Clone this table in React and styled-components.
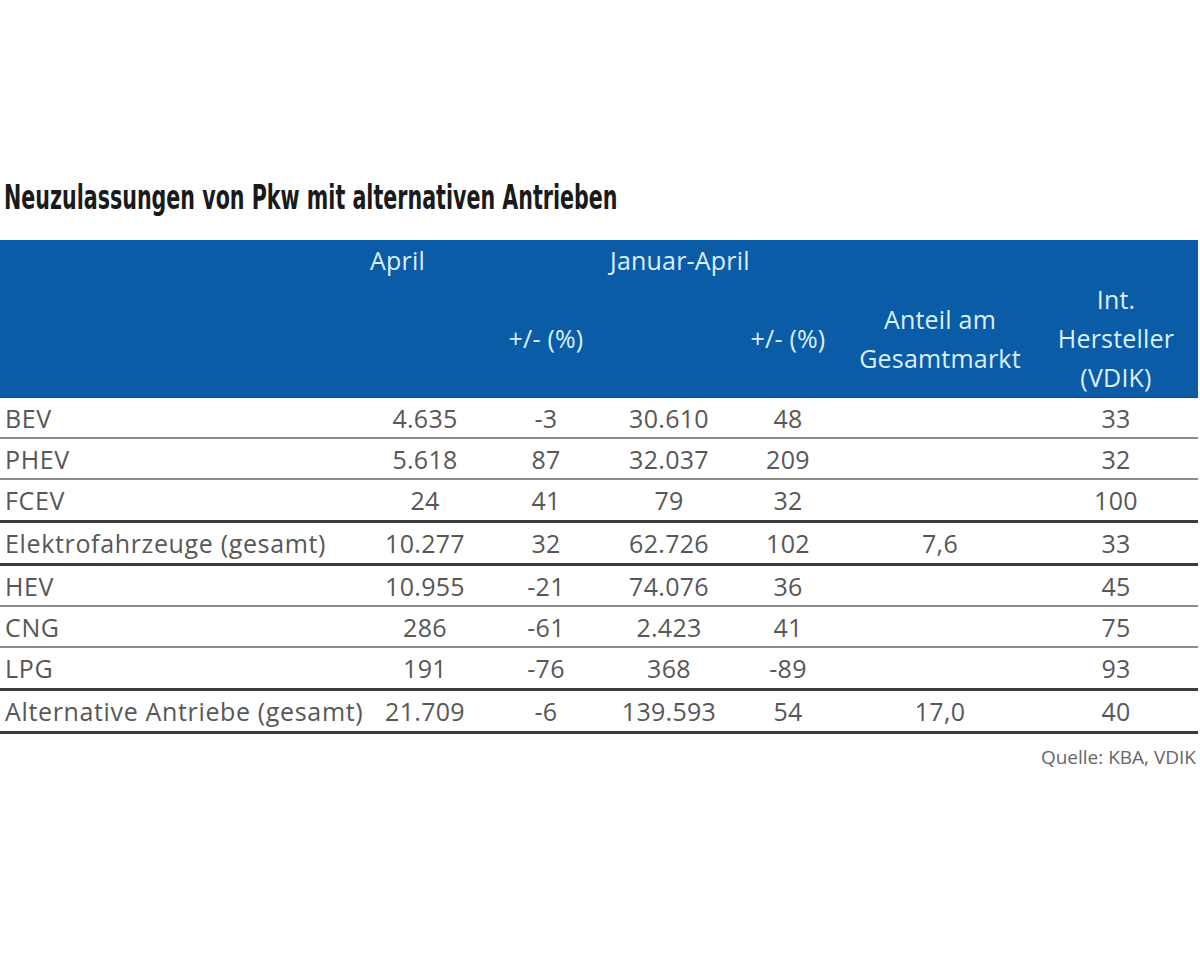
import React from "react";
import styled, { createGlobalStyle } from "styled-components";

const Global = createGlobalStyle`
  html, body { margin: 0; padding: 0; background: #ffffff; }
  body { font-family: "Open Sans", "Liberation Sans", sans-serif; }
`;

const COLS = "366px 118px 124px 122px 116px 188px 164px";

const Page = styled.div`
  width: 1200px;
  height: 975px;
  padding-top: 178px;
  box-sizing: border-box;
  background: #fff;
`;

const Title = styled.h1`
  margin: 0 0 0 4px;
  height: 62px;
  font-family: "Liberation Sans Narrow", "DejaVu Sans Condensed", sans-serif;
  font-weight: 700;
  font-size: 33px;
  line-height: 40px;
  color: #1a1a1a;
  transform: scaleX(0.695);
  transform-origin: left top;
  white-space: nowrap;
`;

const Table = styled.div`
  width: 1198px;
`;

const Head = styled.div`
  display: grid;
  grid-template-columns: ${COLS};
  grid-template-rows: 40px 117px;
  background: #0b5ca6;
  color: #dcefff;
  font-size: 25px;
  line-height: 39px;
  letter-spacing: 0.2px;
  border-bottom: 1px solid #084a87;
`;

const GroupLabel = styled.div`
  grid-row: 1;
  grid-column: ${(p) => p.$col} / span 2;
  padding-left: ${(p) => p.$pad}px;
  display: flex;
  align-items: center;
  white-space: nowrap;
`;

const SubLabel = styled.div`
  grid-row: 2;
  grid-column: ${(p) => p.$col};
  display: flex;
  align-items: center;
  justify-content: center;
  text-align: center;
  white-space: nowrap;
`;

const Row = styled.div`
  display: grid;
  grid-template-columns: ${COLS};
  height: ${(p) => (p.$strong ? 40 : 39)}px;
  align-items: center;
  font-size: 25px;
  letter-spacing: 0.3px;
  color: #575757;
  border-bottom: ${(p) => (p.$strong ? "3px solid #3c3c3c" : "2px solid #8c8c8c")};
`;

const Label = styled.div`
  padding-left: 5px;
  letter-spacing: 0.65px;
  white-space: nowrap;
`;

const Cell = styled.div`
  text-align: center;
  white-space: nowrap;
`;

const Source = styled.div`
  width: 1196px;
  text-align: right;
  font-size: 19px;
  color: #666;
  margin-top: 10px;
`;

const rows = [
  ["BEV", "4.635", "-3", "30.610", "48", "", "33", false],
  ["PHEV", "5.618", "87", "32.037", "209", "", "32", false],
  ["FCEV", "24", "41", "79", "32", "", "100", true],
  ["Elektrofahrzeuge (gesamt)", "10.277", "32", "62.726", "102", "7,6", "33", true],
  ["HEV", "10.955", "-21", "74.076", "36", "", "45", false],
  ["CNG", "286", "-61", "2.423", "41", "", "75", false],
  ["LPG", "191", "-76", "368", "-89", "", "93", true],
  ["Alternative Antriebe (gesamt)", "21.709", "-6", "139.593", "54", "17,0", "40", true],
];

export default function App() {
  return (
    <>
      <Global />
      <Page>
        <Title>Neuzulassungen von Pkw mit alternativen Antrieben</Title>
        <Table>
          <Head>
            <GroupLabel $col={2} $pad={4}>April</GroupLabel>
            <GroupLabel $col={4} $pad={2}>Januar-April</GroupLabel>
            <SubLabel $col={3}>+/- (%)</SubLabel>
            <SubLabel $col={5}>+/- (%)</SubLabel>
            <SubLabel $col={6}>Anteil am<br />Gesamtmarkt</SubLabel>
            <SubLabel $col={7}>Int.<br />Hersteller<br />(VDIK)</SubLabel>
          </Head>
          {rows.map((r) => (
            <Row key={r[0]} $strong={r[7]}>
              <Label>{r[0]}</Label>
              {r.slice(1, 7).map((v, i) => (
                <Cell key={i}>{v}</Cell>
              ))}
            </Row>
          ))}
        </Table>
        <Source>Quelle: KBA, VDIK</Source>
      </Page>
    </>
  );
}
